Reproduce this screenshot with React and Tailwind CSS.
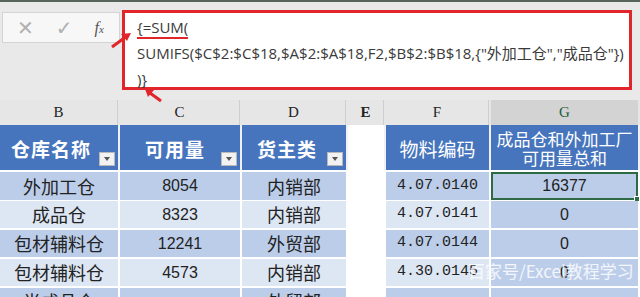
import React from 'react';

const cols = 'grid grid-cols-[118px_120px_104px_36px_103px_147px_1fr] gap-x-[2px]';

const rows = [
  { name: '外加工仓', qty: '8054', dept: '内销部', code: '4.07.0140', sum: '16377', dark: true, selected: true },
  { name: '成品仓', qty: '8323', dept: '内销部', code: '4.07.0141', sum: '0', dark: false },
  { name: '包材辅料仓', qty: '12241', dept: '外贸部', code: '4.07.0144', sum: '0', dark: true },
  { name: '包材辅料仓', qty: '4573', dept: '内销部', code: '4.30.0145', sum: '0', dark: false },
  { name: '半成品仓', qty: '', dept: '外贸部', code: '', sum: '', dark: true },
];

function FilterButton() {
  return (
    <span className="absolute right-[3px] bottom-[4px] w-[16px] h-[14px] bg-[#f2f2f2] border border-[#b9b9b9] flex items-center justify-center">
      <span className="w-0 h-0 border-l-[3px] border-r-[3px] border-t-[4px] border-l-transparent border-r-transparent border-t-[#555]" />
    </span>
  );
}

export default function App() {
  const zh = "font-['Noto_Sans_CJK_SC','Noto_Sans',sans-serif]";
  return (
    <div className="relative w-[640px] h-[297px] overflow-hidden bg-white">
      {/* formula bar */}
      <div className="h-[100px] bg-[#e9e9e9] border-t-[2px] border-[#55655b] flex items-start pt-[8px]">
        <div className="mt-[2px] ml-[2px] w-[118px] h-[31px] bg-[#f7f7f7] border border-[#d4d4d4] flex items-center text-[#b0b0b0]">
          <span className="ml-[14px] text-[20px] font-['DejaVu_Sans',sans-serif] leading-none">✕</span>
          <span className="ml-[22px] text-[20px] font-['DejaVu_Sans',sans-serif] leading-none">✓</span>
          <span className="ml-[22px] text-[16px] italic text-[#555] font-['Liberation_Serif',serif]">
            f<span className="text-[11px]">x</span>
          </span>
        </div>
        <div className="ml-[2px] w-[510px] h-[80px] bg-white border-[3px] border-[#e0262b] pl-[12px] pt-[1px] text-[15px] leading-[26px] text-[#3a3a3a] font-['Open_Sans','Noto_Sans_CJK_SC',sans-serif]">
          <div>
            <span className="inline-block leading-[20px] border-b-[2px] border-[#e0262b]">{'{=SUM('}</span>
          </div>
          <div className="whitespace-nowrap">SUMIFS($C$2:$C$18,$A$2:$A$18,F2,$B$2:$B$18,{'{'}"外加工仓","成品仓"{'}'})</div>
          <div>{')}'}</div>
        </div>
      </div>

      {/* column letters */}
      <div className={`${cols} h-[25px] bg-[#e6e6e6] text-[15px] text-[#222] font-['Liberation_Serif',serif]`}>
        <div className="flex items-center justify-center border-r border-[#cfcfcf]">B</div>
        <div className="flex items-center justify-center border-r border-[#cfcfcf]">C</div>
        <div className="flex items-center justify-center border-r border-[#cfcfcf]">D</div>
        <div className="flex items-center justify-center border-r border-[#cfcfcf] font-bold">E</div>
        <div className="flex items-center justify-center border-r border-[#cfcfcf]">F</div>
        <div className="flex items-center justify-center bg-[#d3d3d3] text-[#1f5c3a]">G</div>
        <div />
      </div>

      {/* header */}
      <div className={`${cols} h-[45px] bg-[#eef2f8] ${zh}`}>
        <div className="relative bg-[#4675bd] text-white text-[19px] tracking-[1px] font-bold flex items-center justify-center pr-[16px] pt-[4px]">仓库名称<FilterButton /></div>
        <div className="relative bg-[#4675bd] text-white text-[19px] tracking-[1px] font-bold flex items-center justify-center pr-[10px] pt-[4px]">可用量<FilterButton /></div>
        <div className="relative bg-[#4675bd] text-white text-[19px] tracking-[1px] font-bold flex items-center justify-center pr-[14px] pt-[4px]">货主类<FilterButton /></div>
        <div className="bg-white" />
        <div className="bg-[#4675bd] text-white text-[19px] flex items-center justify-center pt-[4px]">物料编码</div>
        <div className="bg-[#4675bd] text-white text-[17px] leading-[19px] flex flex-col items-center justify-center">
          <span>成品仓和外加工厂</span>
          <span>可用量总和</span>
        </div>
        <div className="bg-white" />
      </div>

      {/* data */}
      <div className="flex flex-col gap-y-[2px] pt-[2px] bg-white">
        {rows.map((r, i) => {
          const fill = r.dark ? 'bg-[#bccde9]' : 'bg-[#dde6f3]';
          return (
            <div key={i} className={`${cols} h-[27px]`}>
              <div className={`${fill} ${zh} text-[18px] text-[#222] flex items-center justify-center`}>{r.name}</div>
              <div className={`${fill} font-['Liberation_Sans',sans-serif] text-[16px] text-[#222] flex items-center justify-center`}>{r.qty}</div>
              <div className={`${fill} ${zh} text-[18px] text-[#222] flex items-center justify-center`}>{r.dept}</div>
              <div className="bg-white" />
              <div className={`${fill} font-['Liberation_Mono',monospace] text-[15px] text-[#222] flex items-center justify-center`}>{r.code}</div>
              <div
                className={`relative bg-[#bccde9] font-['Liberation_Sans',sans-serif] text-[16px] text-[#222] flex items-center justify-center ${
                  r.selected ? 'border-[2px] border-[#2d6b45]' : ''
                }`}
              >
                {r.sum}
                {r.selected && <span className="absolute -right-[4px] -bottom-[4px] w-[6px] h-[6px] bg-[#2d6b45] border border-white" />}
              </div>
              <div className="bg-white" />
            </div>
          );
        })}
      </div>

      {/* annotation arrows */}
      <svg className="absolute left-[110px] top-[30px]" width="24" height="20" viewBox="0 0 24 20">
        <path d="M2 17 L17 6" stroke="#e0262b" strokeWidth="3" fill="none" />
        <path d="M21 3 L11 4 L17 11 Z" fill="#e0262b" />
      </svg>
      <svg className="absolute left-[142px] top-[88px]" width="22" height="16" viewBox="0 0 22 16">
        <path d="M19 13 L8 5" stroke="#e0262b" strokeWidth="3" fill="none" />
        <path d="M3 1 L12 2 L6 9 Z" fill="#e0262b" />
      </svg>

      {/* watermark */}
      <div className={`absolute left-[468px] top-[258px] whitespace-nowrap text-[17px] text-white/80 ${zh}`}>百家号/Excel教程学习</div>
    </div>
  );
}
